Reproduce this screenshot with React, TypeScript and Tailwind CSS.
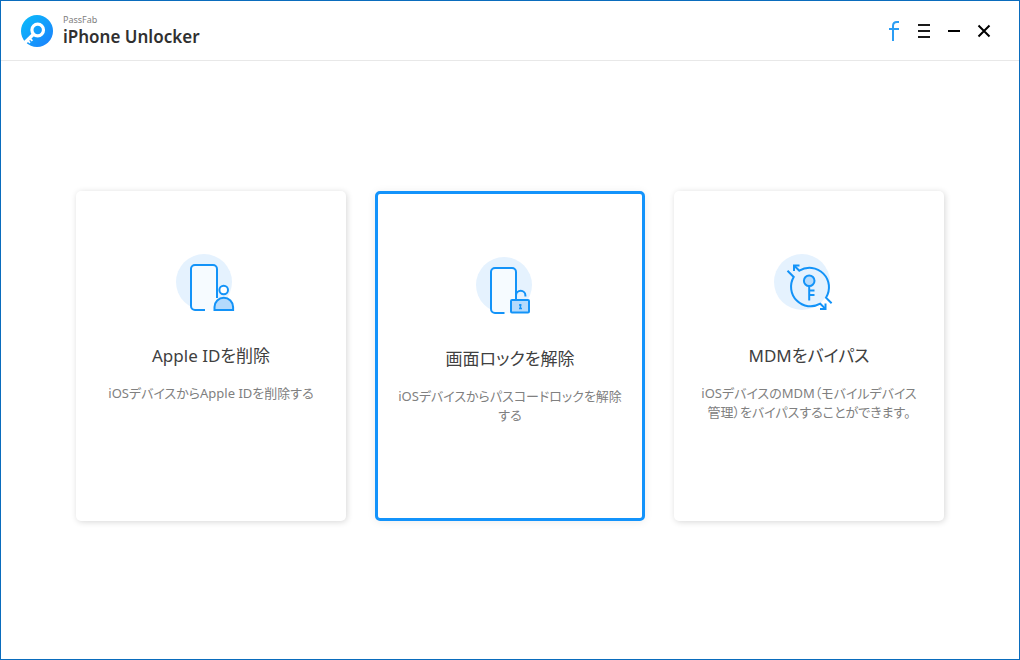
import React from 'react';

const Logo = () => (
  <svg className="w-8 h-8" viewBox="0 0 32 32" fill="none">
    <defs>
      <linearGradient id="logo" x1="4" y1="4" x2="28" y2="28" gradientUnits="userSpaceOnUse">
        <stop stopColor="#0cb6fb" />
        <stop offset="1" stopColor="#1a86fc" />
      </linearGradient>
    </defs>
    <circle cx="16" cy="16" r="16" fill="url(#logo)" />
    <circle cx="16.7" cy="15" r="5.8" stroke="#fff" strokeWidth="3.2" />
    <path d="M12.2 19.5L4 27.500" stroke="#fff" strokeWidth="3.4" />
    <path d="M9 23.500l2.400 2.400M6.400 25l2.600 2.800" stroke="#fff" strokeWidth="1.800" />
  </svg>
);

const AppleIdIcon = () => (
  <svg className="w-18 h-16" viewBox="0 0 72 64" fill="none" stroke="#1393f8" strokeWidth="2">
    <circle cx="29" cy="32" r="28" fill="#e5f2fe" stroke="none" />
    <rect x="16" y="15" width="26" height="45" rx="4" fill="#f6fbff" stroke="none" />
    <path d="M30 60H20a4 4 0 0 1-4-4V19a4 4 0 0 1 4-4h18a4 4 0 0 1 4 4v29" />
    <circle cx="48.700" cy="40" r="4.300" fill="#fff" />
    <path d="M39.500 60v-3a9.300 9.300 0 0 1 18.600 0v3z" fill="#b4dafc" />
  </svg>
);

const ScreenLockIcon = () => (
  <svg className="w-18 h-16" viewBox="0 0 72 64" fill="none" stroke="#1393f8" strokeWidth="2">
    <circle cx="30" cy="32" r="28" fill="#e5f2fe" stroke="none" />
    <rect x="17" y="15" width="25" height="45" rx="4" fill="#f6fbff" stroke="none" />
    <path d="M30.500 60H21a4 4 0 0 1-4-4V19a4 4 0 0 1 4-4h17a4 4 0 0 1 4 4v28" />
    <path d="M42 47v-4.500a4.700 4.700 0 0 1 9.400 0v1" />
    <rect x="37" y="47" width="18" height="12.500" rx="1" fill="#b4dafc" />
    <path d="M46.400 51v5M45 52h2.500M45 55.500h3" strokeWidth="1.500" />
  </svg>
);

const MdmIcon = () => (
  <svg className="w-18 h-16" viewBox="0 0 72 64" fill="none" stroke="#1393f8" strokeWidth="2">
    <circle cx="29" cy="32" r="28" fill="#e5f2fe" stroke="none" />
    <path d="M14.500 20.800l6.200 6.200A19.500 19.500 0 0 0 47.300 53.700l5.200 5.200" />
    <path d="M58.600 53.200L53 47.700A19.500 19.500 0 0 0 26.300 20.700l-5-5" />
    <path d="M21 21v-5.500h5.500M52.500 53.500V59H47" />
    <circle cx="36.200" cy="30.700" r="5.300" fill="#b4dafc" />
    <path d="M36.200 36v14.500M36.200 40.500h5.300M36.200 45h5.300" />
  </svg>
);

const cards = [
  { title: 'Apple IDを削除', text: 'iOSデバイスからApple IDを削除する', icon: <AppleIdIcon /> },
  { title: '画面ロックを解除', text: 'iOSデバイスからパスコードロックを解除する', icon: <ScreenLockIcon />, active: true },
  { title: 'MDMをバイパス', text: 'iOSデバイスのMDM（モバイルデバイス管理）をバイパスすることができます。', icon: <MdmIcon /> },
];

const App: React.FC = () => {
  return (
    <div className="min-h-screen flex flex-col bg-white border border-[#0a6cbd] font-['Noto_Sans','Noto_Sans_CJK_JP',sans-serif]">
      {/* Title bar */}
      <header className="h-15 pl-5 pr-[23px] flex items-center justify-between border-b border-[#e8e8e8]">
        <div className="flex items-center gap-[10px]">
          <Logo />
          <div className="flex flex-col">
            <span className="text-[9px] leading-3 text-[#808080]">PassFab</span>
            <h1 className="text-[17px] leading-[22px] font-semibold text-[#303030]">iPhone Unlocker</h1>
          </div>
        </div>
        <nav className="flex items-center gap-[6px]">
          <a href="#" aria-label="Facebook" className="w-6 h-6 flex items-center justify-center">
            <svg className="w-6 h-6" viewBox="0 0 24 24" fill="none" stroke="#2b9df4" strokeWidth="2">
              <path d="M11 22V7q0-4 4-4h2M7 10h10" />
            </svg>
          </a>
          <button aria-label="Menu" className="w-6 h-6">
            <svg className="w-6 h-6" viewBox="0 0 24 24" stroke="#1a1a1a" strokeWidth="2">
              <path d="M6 6h12M6 12h12M6 18h12" />
            </svg>
          </button>
          <button aria-label="Minimize" className="w-6 h-6">
            <svg className="w-6 h-6" viewBox="0 0 24 24" stroke="#000" strokeWidth="2">
              <path d="M6 12h12" />
            </svg>
          </button>
          <button aria-label="Close" className="w-6 h-6">
            <svg className="w-6 h-6" viewBox="0 0 24 24" stroke="#000" strokeWidth="2">
              <path d="M6.500 6.500l11 11M17.500 6.500l-11 11" />
            </svg>
          </button>
        </nav>
      </header>

      {/* Feature cards */}
      <main className="grow px-[75px] py-[130px] grid grid-cols-3 gap-[29px] items-start">
        {cards.map((card) => (
          <button
            key={card.title}
            className={`min-h-[330px] pt-[59px] flex flex-col items-center justify-start bg-white rounded-[5px] ${card.active ? 'px-[19px] border-[3px] border-[#1393fb] shadow-[0_1px_8px_rgba(0,0,0,0.08)]' : 'px-[22px] shadow-[1px_1px_6px_rgba(0,0,0,0.16)]'}`}
          >
            {card.icon}
            <h2 className="mt-[30px] text-[17px] leading-6 text-[#404040] [font-feature-settings:'palt']">{card.title}</h2>
            <p className="mt-4 text-[13px] leading-[19px] text-[#808080] [font-feature-settings:'palt']">{card.text}</p>
          </button>
        ))}
      </main>
    </div>
  );
};

export default App;
